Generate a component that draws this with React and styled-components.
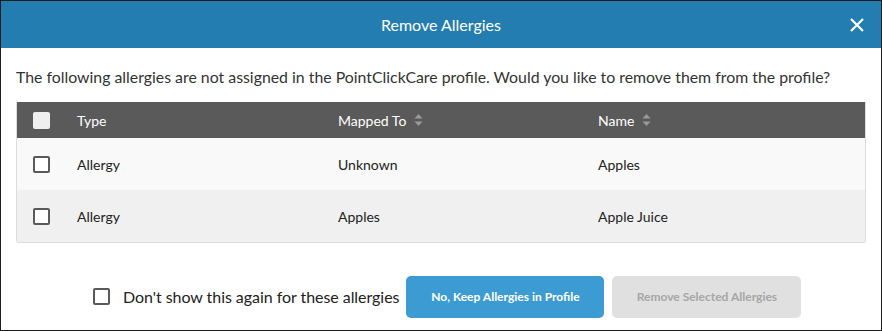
import React from "react";
import styled, { createGlobalStyle } from "styled-components";

const Global = createGlobalStyle`
  html, body { margin: 0; padding: 0; background: #fff; }
  * { box-sizing: border-box; }
  body { font-family: Lato, "Noto Sans", Arial, sans-serif; }
`;

const Dialog = styled.div`
  width: 882px;
  height: 331px;
  border: 1px solid #1c1c1c;
  display: flex;
  flex-direction: column;
  background: #fff;
`;

const Header = styled.div`
  height: 47px;
  background: #247db0;
  color: #fff;
  display: flex;
  align-items: center;
  justify-content: center;
  position: relative;
  font-size: 16px;
`;

const Close = styled.button`
  position: absolute;
  right: 14px;
  top: 14px;
  width: 20px;
  height: 20px;
  padding: 0;
  border: 0;
  background: none;
  display: flex;
  align-items: center;
  justify-content: center;
  cursor: pointer;
`;

const Body = styled.div`
  padding: 0 15px;
  display: flex;
  flex-direction: column;
`;

const Intro = styled.p`
  margin: 0;
  height: 54px;
  display: flex;
  align-items: center;
  font-size: 15.85px;
  color: #333;
  padding-top: 3px;
  white-space: nowrap;
`;

const Table = styled.div`
  border: 1px solid #dcdcdc;
  border-top: 0;
  border-radius: 0 0 3px 3px;
  overflow: hidden;
`;

const Row = styled.div`
  display: grid;
  grid-template-columns: 60px 261px 260px 1fr;
  align-items: center;
  height: ${(p) => (p.$head ? 36 : 52)}px;
  background: ${(p) => p.$bg};
  color: ${(p) => (p.$head ? "#fff" : "#222")};
  font-size: 14px;
`;

const CheckCell = styled.div`
  padding-left: 16px;
  display: flex;
  align-items: center;
`;

const Box = styled.span`
  display: inline-block;
  flex: none;
  width: 17px;
  height: 17px;
  border-radius: 2px;
  ${(p) =>
    p.$filled
      ? "background: #efefef; border: 0;"
      : "background: #fff; border: 2px solid #5a5a5a;"}
`;

const HeadLabel = styled.div`
  display: flex;
  align-items: center;
  gap: 8px;
`;

const Sort = () => (
  <svg width="9" height="14" viewBox="0 0 9 14">
    <path d="M4.5 1 L8.5 5.5 H0.5 Z" fill="#9a9a9a" />
    <path d="M4.5 13 L8.5 8.5 H0.5 Z" fill="#9a9a9a" />
  </svg>
);

const Footer = styled.div`
  flex: 1;
  display: flex;
  align-items: center;
  padding-left: 92px;
  padding-top: 20px;
`;

const Label = styled.label`
  display: flex;
  align-items: center;
  gap: 13px;
  font-size: 16px;
  color: #222;
  margin-right: 7px;
  letter-spacing: -0.05px;
`;

const Button = styled.button`
  height: 42px;
  width: ${(p) => p.$w}px;
  border: 0;
  border-radius: 5px;
  font-family: Lato, "Noto Sans", Arial, sans-serif;
  font-size: 12px;
  font-weight: 700;
  margin-right: 8px;
  background: ${(p) => (p.$primary ? "#3d9bd3" : "#e0e0e0")};
  color: ${(p) => (p.$primary ? "#fff" : "#a6a6a6")};
`;

const rows = [
  { type: "Allergy", mapped: "Unknown", name: "Apples", bg: "#f9f9f9" },
  { type: "Allergy", mapped: "Apples", name: "Apple Juice", bg: "#f0f0f0" },
];

export default function App() {
  return (
    <>
      <Global />
      <Dialog>
        <Header>
          Remove Allergies
          <Close aria-label="Close">
            <svg width="16" height="16" viewBox="0 0 16 16">
              <path d="M2 2 L14 14 M14 2 L2 14" stroke="#fff" strokeWidth="2.2" />
            </svg>
          </Close>
        </Header>
        <Body>
          <Intro>
            The following allergies are not assigned in the PointClickCare profile. Would you like to remove them from the profile?
          </Intro>
          <Table>
            <Row $head $bg="#5a5a5a">
              <CheckCell>
                <Box $filled />
              </CheckCell>
              <HeadLabel>Type</HeadLabel>
              <HeadLabel>
                Mapped To <Sort />
              </HeadLabel>
              <HeadLabel>
                Name <Sort />
              </HeadLabel>
            </Row>
            {rows.map((r, i) => (
              <Row key={i} $bg={r.bg}>
                <CheckCell>
                  <Box />
                </CheckCell>
                <div>{r.type}</div>
                <div>{r.mapped}</div>
                <div>{r.name}</div>
              </Row>
            ))}
          </Table>
        </Body>
        <Footer>
          <Label>
            <Box />
            Don't show this again for these allergies
          </Label>
          <Button $primary $w={198}>No, Keep Allergies in Profile</Button>
          <Button $w={189} disabled>Remove Selected Allergies</Button>
        </Footer>
      </Dialog>
    </>
  );
}
